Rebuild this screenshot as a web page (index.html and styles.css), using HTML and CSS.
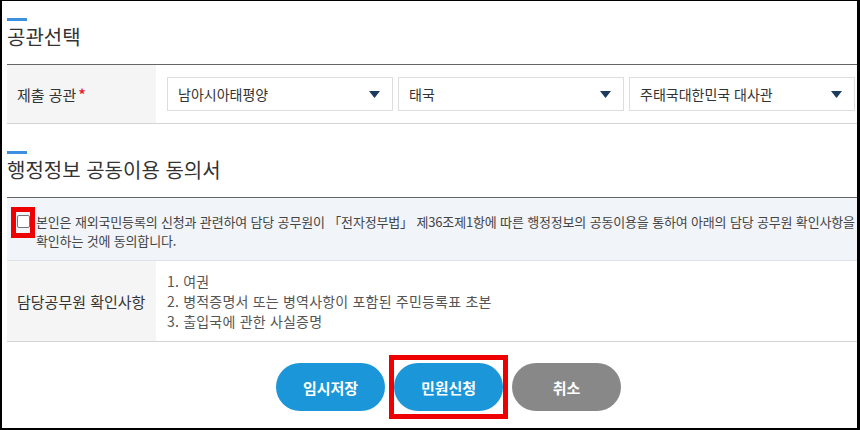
FILE: index.html
```html
<!DOCTYPE html>
<html lang="ko">
<head>
<meta charset="utf-8">
<title>공관선택</title>
<link rel="stylesheet" href="styles.css">
</head>
<body>
<div class="frame">
  <div class="page">
    <section class="section first">
      <div class="bar"></div>
      <h2 class="title">공관선택</h2>
      <div class="table">
        <div class="row">
          <div class="label">제출 공관<span class="star">*</span></div>
          <div class="cell selects">
            <div class="select"><span>남아시아태평양</span><svg class="arrow" width="11" height="7" viewBox="0 0 11 7"><path d="M0 0H11L5.5 7Z"/></svg></div>
            <div class="select"><span>태국</span><svg class="arrow" width="11" height="7" viewBox="0 0 11 7"><path d="M0 0H11L5.5 7Z"/></svg></div>
            <div class="select"><span>주태국대한민국 대사관</span><svg class="arrow" width="11" height="7" viewBox="0 0 11 7"><path d="M0 0H11L5.5 7Z"/></svg></div>
          </div>
        </div>
      </div>
    </section>

    <section class="section second">
      <div class="bar"></div>
      <h2 class="title">행정정보 공동이용 동의서</h2>
      <div class="table">
        <div class="agree">
          <span class="check-wrap"><input type="checkbox" class="check"></span>
          <p class="agree-text">본인은 재외국민등록의 신청과 관련하여 담당 공무원이 「전자정부법」 제36조제1항에 따른 행정정보의 공동이용을 통하여 아래의 담당 공무원 확인사항을<br>확인하는 것에 동의합니다.</p>
        </div>
        <div class="row row-list">
          <div class="label">담당공무원 확인사항</div>
          <div class="cell">
            <ol class="list">
              <li>1. 여권</li>
              <li>2. 병적증명서 또는 병역사항이 포함된 주민등록표 초본</li>
              <li>3. 출입국에 관한 사실증명</li>
            </ol>
          </div>
        </div>
      </div>
    </section>

    <div class="buttons">
      <button class="btn blue">임시저장</button>
      <span class="mark"><button class="btn blue">민원신청</button></span>
      <button class="btn gray">취소</button>
    </div>
  </div>
</div>
</body>
</html>
```

FILE: styles.css
```css
* { box-sizing: border-box; }
html, body { margin: 0; padding: 0; background: #fff; }
body {
  font-family: "Noto Sans CJK KR", "Noto Sans", sans-serif;
  color: #333;
}
.frame {
  width: 860px;
  height: 430px;
  border-top: 1px solid #000;
  border-left: 2px solid #000;
  border-right: 3px solid #000;
  border-bottom: 2px solid #000;
  overflow: hidden;
}
.page {
  width: 888px;
  padding-left: 5px;
}
.section.first { padding-top: 17px; }
.section.second { padding-top: 27px; }
.bar {
  width: 20px;
  height: 3px;
  background: #3d8fdf;
}
.title {
  margin: 2px 0 13px;
  font-size: 20px;
  line-height: 28px;
  font-weight: 400;
  color: #333;
}
.table {
  border-top: 1px solid #666;
}
.row {
  display: flex;
  border-bottom: 1px solid #d4d4d4;
}
.label {
  width: 149px;
  flex: none;
  background: #f5f5f5;
  padding-left: 10px;
  font-size: 15px;
  color: #333;
  display: flex;
  align-items: center;
}
.star { color: #e8212e; font-size: 14px; font-weight: 700; margin-left: 2px; }
.cell {
  flex: 1;
  padding: 12px 11px;
}
.selects {
  display: flex;
  gap: 5px;
}
.select {
  width: 226px;
  height: 34px;
  border: 1px solid #ddd;
  display: flex;
  align-items: center;
  justify-content: space-between;
  padding: 0 12px 0 10px;
  font-size: 14px;
  color: #333;
  background: #fff;
}
.arrow { fill: #1c3a5e; margin-top: 1px; }
.agree {
  display: flex;
  align-items: flex-start;
  background: #f1f4f9;
  padding: 14px 10px 10px 10px;
  border-bottom: 1px solid #dde1e8;
}
.check-wrap {
  position: relative;
  flex: none;
  margin-top: 3px;
  margin-right: 6px;
  width: 13px;
  height: 13px;
}
.check-wrap::after {
  content: "";
  position: absolute;
  left: -6px;
  top: -8px;
  right: -5px;
  bottom: -10px;
  border: 5px solid #ee0000;
}
.check {
  appearance: none;
  -webkit-appearance: none;
  margin: 0;
  width: 13px;
  height: 13px;
  border: 1px solid #767676;
  border-radius: 2px;
  background: #fff;
  display: block;
}
.agree-text {
  margin: 0;
  font-size: 13px;
  line-height: 19px;
  letter-spacing: -0.16px;
  color: #444;
  white-space: nowrap;
}
.row-list .cell { padding: 10px 11px; }
.list {
  list-style: none;
  margin: 0;
  padding: 0;
  font-size: 14px;
  line-height: 20px;
  letter-spacing: 0.2px;
  color: #555;
}
.buttons {
  display: flex;
  justify-content: center;
  gap: 9px;
  margin-top: 21px;
}
.btn {
  width: 109px;
  height: 48px;
  border: 0;
  border-radius: 24px;
  font-family: inherit;
  font-size: 15px;
  font-weight: 700;
  color: #fff;
  padding: 0;
}
.blue { background: #1b96d9; }
.gray { background: #888; }
.mark {
  position: relative;
  display: block;
}
.mark .btn { display: block; }
.mark::after {
  content: "";
  position: absolute;
  left: -5px;
  right: -5px;
  top: -8px;
  bottom: -8px;
  border: 5px solid #ee0000;
}
```
